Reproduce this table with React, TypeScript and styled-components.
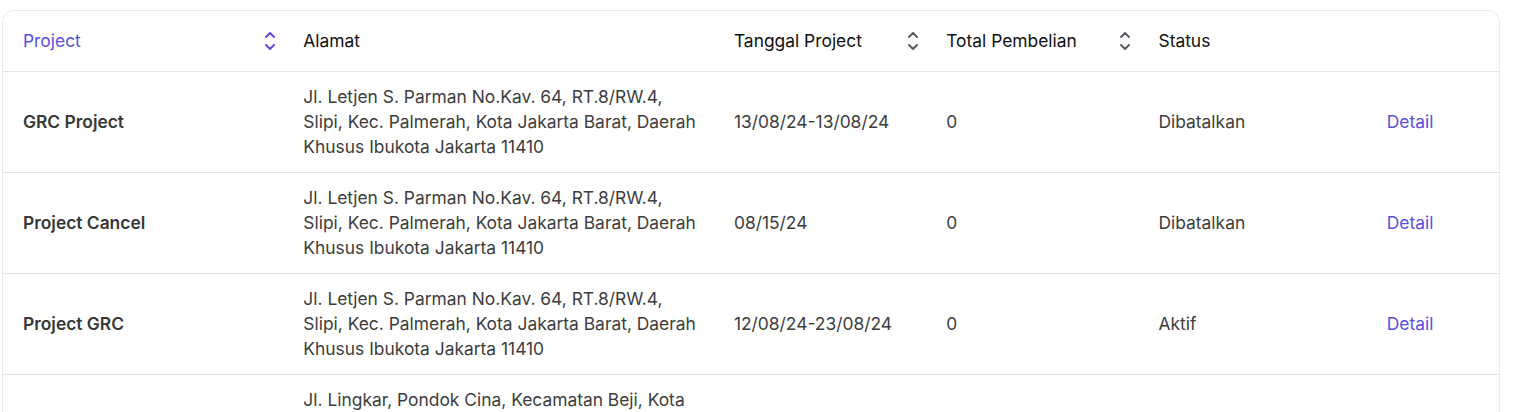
import React from 'react';
import styled, { createGlobalStyle } from 'styled-components';

// ------------------------------------------------------------------------------------------------

type ProjectRow = {
  name: string;
  address: string;
  date: string;
  total: string;
  status: string;
};

type Column = {
  label: string;
  width: number;
  sortable?: boolean;
  active?: boolean;
};

const columns: Array<Column> = [
  { label: 'Project', width: 280, sortable: true, active: true },
  { label: 'Alamat', width: 430 },
  { label: 'Tanggal Project', width: 212, sortable: true },
  { label: 'Total Pembelian', width: 212, sortable: true },
  { label: 'Status', width: 228 },
  { label: '', width: 132 },
];

const slipi =
  'Jl. Letjen S. Parman No.Kav. 64, RT.8/RW.4, Slipi, Kec. Palmerah, Kota Jakarta Barat, Daerah Khusus Ibukota Jakarta 11410';

const rows: Array<ProjectRow> = [
  { name: 'GRC Project', address: slipi, date: '13/08/24-13/08/24', total: '0', status: 'Dibatalkan' },
  { name: 'Project Cancel', address: slipi, date: '08/15/24', total: '0', status: 'Dibatalkan' },
  { name: 'Project GRC', address: slipi, date: '12/08/24-23/08/24', total: '0', status: 'Aktif' },
  {
    name: 'Project Depok',
    address: 'Jl. Lingkar, Pondok Cina, Kecamatan Beji, Kota Depok, Jawa Barat 16424, Kawasan Universitas Indonesia',
    date: '10/08/24-20/08/24',
    total: '0',
    status: 'Aktif',
  },
];

// up / down chevrons used as the sort toggle
const SortChevrons: React.FC = () => (
  <svg width="12" height="20" viewBox="0 0 12 20" fill="none" stroke="currentColor" strokeWidth="2" strokeLinecap="round" strokeLinejoin="round">
    <path d="M2 6l4-4 4 4" />
    <path d="M2 14l4 4 4-4" />
  </svg>
);

const App: React.FC = () => {
  return (
    <>
      <GlobalStyle />
      <Page>
        <Card>
          <Table>
            <colgroup>
              {columns.map((col, i) => (
                <col key={i} style={{ width: col.width }} />
              ))}
            </colgroup>
            <thead>
              <tr>
                {columns.map((col, i) => (
                  <HeadCell key={i} $active={col.active}>
                    <HeadInner>
                      <span>{col.label}</span>
                      {col.sortable && (
                        <SortIcon $active={col.active}>
                          <SortChevrons />
                        </SortIcon>
                      )}
                    </HeadInner>
                  </HeadCell>
                ))}
              </tr>
            </thead>
            <tbody>
              {rows.map((row, i) => (
                <tr key={i}>
                  <NameCell>{row.name}</NameCell>
                  <AddressCell>{row.address}</AddressCell>
                  <Cell>{row.date}</Cell>
                  <Cell>{row.total}</Cell>
                  <Cell>{row.status}</Cell>
                  <Cell>
                    <DetailLink href="#">Detail</DetailLink>
                  </Cell>
                </tr>
              ))}
            </tbody>
          </Table>
        </Card>
      </Page>
    </>
  );
};

export default App;

// ------------------------------------------------------------------------------------------------

const GlobalStyle = createGlobalStyle`
  html, body {
    margin: 0;
    padding: 0;
    background: #ffffff;
    font-family: Inter, 'Noto Sans', sans-serif;
  }
`;

const Page = styled.div`
  padding: 10px 17px 0 2px;
  height: 412px;
  box-sizing: border-box;
  overflow: hidden;
`;

const Card = styled.div`
  width: 1496px;
  border: 1px solid #ebebeb;
  border-radius: 12px;
  overflow: hidden;
  background: #ffffff;
`;

const Table = styled.table`
  width: 100%;
  table-layout: fixed;
  border-collapse: collapse;
  font-size: 17.4px;
`;

const HeadCell = styled.th<{ $active?: boolean }>`
  height: 60px;
  padding: 0 20px;
  text-align: left;
  font-weight: 400;
  line-height: 24px;
  color: ${({ $active }) => ($active ? '#5a4fe3' : '#111111')};
  border-bottom: 1px solid #e4e4e4;
`;

const HeadInner = styled.div`
  display: flex;
  align-items: center;
  justify-content: space-between;
  margin-right: -13px;
`;

const SortIcon = styled.span<{ $active?: boolean }>`
  display: flex;
  color: ${({ $active }) => ($active ? '#5a4fe3' : '#555b66')};
`;

const Cell = styled.td`
  height: 100px;
  box-sizing: border-box;
  padding: 12px 20px 13px;
  line-height: 25px;
  color: #3d3d3d;
  vertical-align: middle;
  border-bottom: 1px solid #e4e4e4;
`;

const AddressCell = styled(Cell)`
  padding-right: 12px;
`;

const NameCell = styled(Cell)`
  font-weight: 600;
  color: #383838;
`;

const DetailLink = styled.a`
  color: #5a4fe3;
  text-decoration: none;
`;
